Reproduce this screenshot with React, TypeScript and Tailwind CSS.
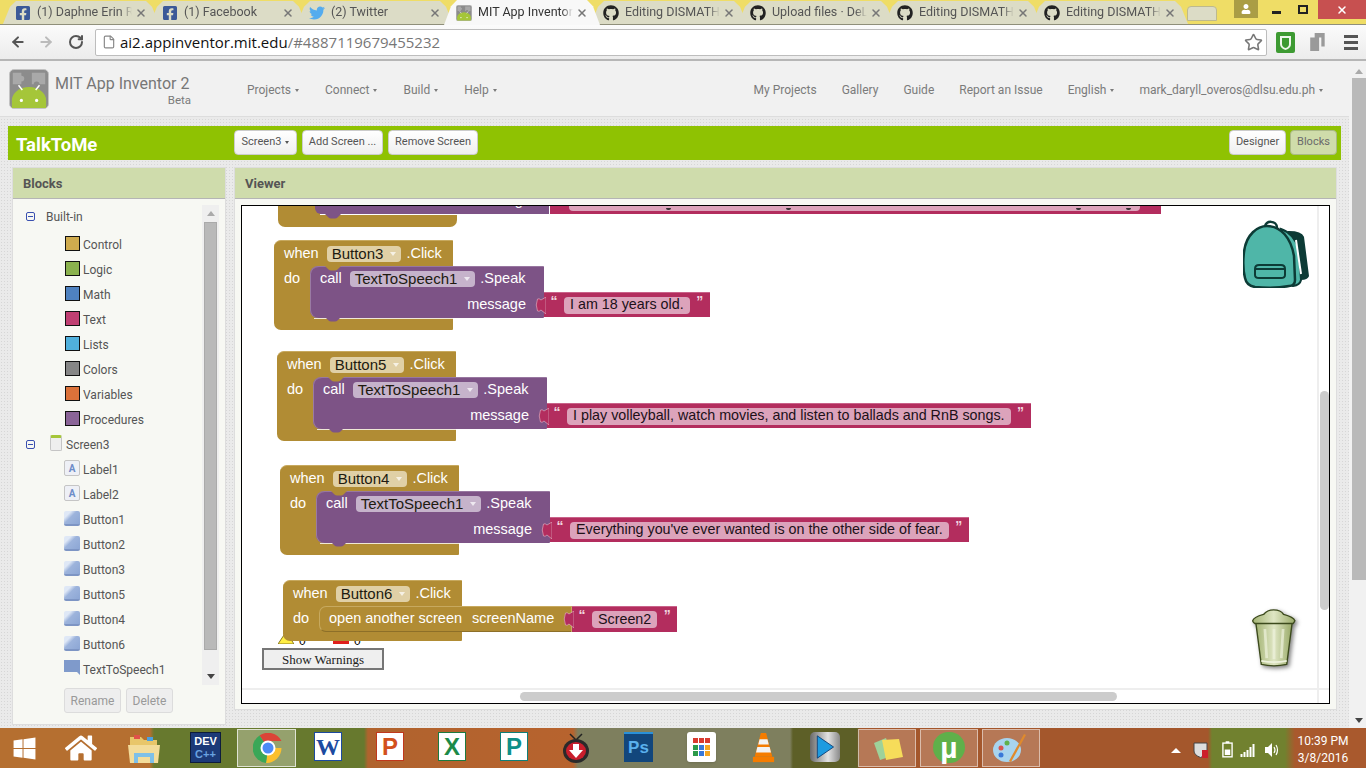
import React from 'react';
import { ArrowLeft, ArrowRight, RotateCw, Star, File, X } from 'lucide-react';
import { FaFacebookSquare, FaTwitter, FaGithub, FaWindows, FaHome, FaUser } from 'react-icons/fa';

const tabs = [
  { label: '(1) Daphne Erin R', icon: 'fb' },
  { label: '(1) Facebook', icon: 'fb' },
  { label: '(2) Twitter', icon: 'tw' },
  { label: 'MIT App Inventor', icon: 'ai', active: true },
  { label: 'Editing DISMATH', icon: 'gh' },
  { label: 'Upload files · DeL', icon: 'gh' },
  { label: 'Editing DISMATH', icon: 'gh' },
  { label: 'Editing DISMATH', icon: 'gh' },
];

const palette = [
  { label: 'Control', color: 'bg-[#cfab4e]' },
  { label: 'Logic', color: 'bg-[#8bb24e]' },
  { label: 'Math', color: 'bg-[#4f82c0]' },
  { label: 'Text', color: 'bg-[#c03f72]' },
  { label: 'Lists', color: 'bg-[#50b0dc]' },
  { label: 'Colors', color: 'bg-[#868686]' },
  { label: 'Variables', color: 'bg-[#dc723a]' },
  { label: 'Procedures', color: 'bg-[#8a6497]' },
];

const components = ['Label1', 'Label2', 'Button1', 'Button2', 'Button3', 'Button5', 'Button4', 'Button6', 'TextToSpeech1'];

const AndroidLogo = ({ size = 42 }: { size?: number }) => (
  <svg width={size} height={size} viewBox="0 0 42 42" className="shrink-0">
    <rect x="0.5" y="0.5" width="41" height="41" rx="5" fill="#8c8c8c" stroke="#c4c4c4" />
    <path d="M4 4h9v3a3 3 0 0 1 0 6v3H4zM24 4h14v12h-6a3 3 0 0 0-6 0h-2z" fill="#a9a9a9" />
    <path d="M3 41v-8a18 14 0 0 1 36 0v8z" fill="#a5c639" />
    <path d="M10 17l4 5M32 17l-4 5" stroke="#fff" strokeWidth="1.500" />
    <circle cx="13" cy="33" r="1.700" fill="#fff" />
    <circle cx="29" cy="33" r="1.700" fill="#fff" />
  </svg>
);

const TabIcon = ({ kind }: { kind: string }) => {
  if (kind === 'fb') return <FaFacebookSquare size={16} className="text-[#3b5998] shrink-0" />;
  if (kind === 'tw') return <FaTwitter size={16} className="text-[#55acee] shrink-0" />;
  if (kind === 'ai') return <AndroidLogo size={16} />;
  return <FaGithub size={16} className="text-[#222] shrink-0" />;
};

const Arrow = () => (
  <span className="inline-block ml-[4px] align-middle border-x-[2px] border-t-[3px] border-x-transparent border-t-current" />
);

const Dropdown = ({ label, light }: { label: string; light: string }) => (
  <span className={`ml-[8px] mr-[5px] inline-flex items-center h-[16px] pl-[5px] pr-[5px] rounded-[4px] text-[15px] text-[#201a10] ${light}`}>
    {label}
    <span className="ml-[7px] border-x-[3px] border-t-[4px] border-x-transparent border-t-white/70" />
  </span>
);

const Socket = () => (
  <svg width="11" height="17" viewBox="0 0 11 17" className="absolute left-[-9px] top-[4px]">
    <path d="M11 0L6 3Q4 1 2.500 2Q0 8 2.500 14Q4 15 6 13L11 17z" fill="#b32d5e" stroke="#e4bccb" strokeWidth="0.600" />
  </svg>
);

// pink string block on the end of a value socket
const TextBlock = ({ text, className }: { text: string; className: string }) => (
  <div className={`absolute flex items-center h-[25px] bg-[#b32d5e] border-t border-t-[#c9638a] text-white ${className}`}>
    <Socket />
    <span className="w-[20px] h-full text-center text-[#f0d4de] text-[14px] font-bold leading-[16px]">“</span>
    <span className="h-[17px] px-[6px] rounded-[4px] bg-[#dca3bb] text-[14.300px] text-[#201018] flex items-center whitespace-nowrap">{text}</span>
    <span className="w-[20px] h-full text-center text-[#f0d4de] text-[14px] font-bold leading-[16px]">”</span>
  </div>
);

const Notch = ({ fill, className }: { fill: string; className: string }) => (
  <svg width="16" height="5" viewBox="0 0 16 5" className={`absolute ${className}`}>
    <path d="M0 0h16l-3.500 3.500q-1 1-2.500 1H6q-1.500 0-2.500-1z" fill={fill} />
  </svg>
);

const SpeakBlock = ({ left, top, button, text }: { left: number; top: number; button: string; text: string }) => (
  <div className="absolute w-[440px] h-[91px]" style={{ left, top }}>
    <div className="absolute left-0 top-0 w-[179px] h-[90px] bg-[#b18c34] rounded-l-[7px] rounded-r-[1px] border-t border-t-[#c7a95f]" />
    <div className="absolute left-[10px] top-[5px] h-[18px] flex items-center text-white whitespace-nowrap">
      when<Dropdown label={button} light="bg-[#e0d0a6]" />.Click
    </div>
    <div className="absolute left-[10px] top-[31px] leading-[15px] text-white">do</div>
    <div className="absolute left-[36px] top-[26px] w-[234px] h-[52px] bg-[#7d5386] rounded-l-[8px] rounded-r-[1px] border-t border-t-[#9877a0] shadow-[inset_1px_0_0_#9a7aa3]">
      <div className="absolute left-[10px] top-[3px] h-[18px] flex items-center text-white whitespace-nowrap">
        call<Dropdown label="TextToSpeech1" light="bg-[#c6b3cb]" />.Speak
      </div>
      <div className="absolute right-[18px] top-[30px] leading-[15px] text-white">message</div>
    </div>
    <div className="absolute left-[40px] top-[78px] w-[139px] h-px bg-white/80" />
    <Notch fill="#7d5386" className="left-[51px] top-[77px]" />
    <Notch fill="#b18c34" className="left-[51px] top-[26px]" />
    <TextBlock text={text} className="left-[270px] top-[52px]" />
  </div>
);

const Backpack = () => (
  <svg width="66" height="68" viewBox="0 0 66 68" className="absolute left-[1001px] top-[14px]" fill="none" stroke="#0d3b36" strokeWidth="2">
    <path d="M46 12Q58 12 60 17L65 56Q64 59 58 59Z" fill="#0d3b36" />
    <path d="M38 9Q52 14 56 30L58 60Q57 65 50 66Z" fill="#4fb6a8" />
    <path d="M53 20L58 54" stroke="#fff" strokeWidth="2" />
    <path d="M22 7c0-7 12-7 12 1" strokeWidth="2.500" />
    <path d="M2 58C0 50 0 40 1 32C3 14 15 6 24 6C38 6 48 18 51 36L52 60Q52 66 46 66C35 68 22 68 12 67C6 66 3 63 2 58Z" fill="#4fb6a8" strokeWidth="2.500" />
    <path d="M12 49c0-3 1-4 4-4h22c3 0 4 1 4 4v6c0 2-1 3-4 3H16c-3 0-4-1-4-3z" />
    <path d="M12 49h30" />
  </svg>
);

const Trash = () => (
  <svg width="46" height="60" viewBox="0 0 50 66" className="absolute left-[1009px] top-[403px] drop-shadow-[2px_2px_2px_rgba(0,0,0,0.5)]">
    <defs>
      <linearGradient id="can" x1="0" x2="1" y1="0" y2="0">
        <stop offset="0" stopColor="#a3b373" />
        <stop offset="0.5" stopColor="#dfe6c4" />
        <stop offset="1" stopColor="#98a967" />
      </linearGradient>
    </defs>
    <path d="M5 15h40l-6 46q-14 3-28 0z" fill="url(#can)" stroke="#3c4a1c" strokeWidth="1.500" />
    <path d="M1.500 13q1-4 12-7 4-5 11-5 8 0 11 5 11 3 12.500 7-1 2-2 3H4q-2-1-2.500-3z" fill="url(#can)" stroke="#3c4a1c" strokeWidth="1.500" />
    <path d="M15 22l2 32M25 22v33M35 22l-2 32" stroke="#eef2dc" strokeWidth="3" opacity="0.7" />
    <path d="M11 57q14 3 28 0" stroke="#eef2dc" strokeWidth="2" fill="none" />
  </svg>
);

const Workspace = () => (
  <div className="relative flex-1 mx-[6px] mb-[5px] mt-[6px] border border-black bg-white overflow-hidden font-['Liberation_Sans',Arial,sans-serif] text-[14.500px]">
    {/* partly scrolled off block */}
    <div className="absolute left-[36px] top-[-110px]">
      <div className="absolute left-0 top-0 w-[179px] h-[131px] bg-[#b18c34] rounded-b-[7px] rounded-tr-none" />
      <div className="absolute left-[37px] top-0 w-[234px] h-[118px] bg-[#7d5386] rounded-bl-[6px]" />
      <div className="absolute left-[42px] top-[118px] w-[137px] h-px bg-white" />
      <Notch fill="#7d5386" className="left-[47px] top-[118px]" />
      <div className="absolute left-[194px] top-[97px] leading-[15px] text-white">message</div>
      <div className="absolute left-[272px] top-[92px] w-[611px] h-[26px] bg-[#b32d5e]">
        <div className="mt-[5px] ml-[19px] h-[18px] rounded-[4px] bg-[#dca3bb] w-[571px]" />
        <span className="absolute left-[116px] top-[20px] w-[5px] h-[2px] rounded-b-full bg-[#333]" />
        <span className="absolute left-[236px] top-[20px] w-[5px] h-[2px] rounded-b-full bg-[#333]" />
        <span className="absolute left-[526px] top-[20px] w-[5px] h-[2px] rounded-b-full bg-[#333]" />
        <span className="absolute left-[576px] top-[20px] w-[5px] h-[2px] rounded-b-full bg-[#333]" />
      </div>
    </div>

    <SpeakBlock left={32} top={34} button="Button3" text="I am 18 years old." />
    <SpeakBlock left={35} top={145} button="Button5" text="I play volleyball, watch movies, and listen to ballads and RnB songs." />
    <SpeakBlock left={38} top={259} button="Button4" text="Everything you've ever wanted is on the other side of fear." />

    {/* warning counters, partly behind the last block */}
    <svg width="16" height="12" viewBox="0 0 16 12" className="absolute left-[36px] top-[426px]">
      <path d="M8 0l8 12H0z" fill="#ffee44" stroke="#8a7a20" />
    </svg>
    <span className="absolute left-[57px] top-[428px] text-[12px] leading-[14px] text-black">0</span>
    <div className="absolute left-[91px] top-[431px] w-[16px] h-[7px] bg-[#e0201c]" />
    <span className="absolute left-[112px] top-[428px] text-[12px] leading-[14px] text-black">0</span>
    <button className="absolute left-[20px] top-[442px] w-[122px] h-[22px] bg-[#efefef] border-2 border-[#767676] font-['Liberation_Serif',serif] text-[13px] text-[#222]">Show Warnings</button>

    <div className="absolute left-[41px] top-[374px] w-[179px] h-[61px] bg-[#b18c34] rounded-l-[7px] rounded-r-[1px] border-t border-t-[#c7a95f]" />
    <div className="absolute left-[51px] top-[379px] h-[18px] flex items-center text-white whitespace-nowrap">
      when<Dropdown label="Button6" light="bg-[#e0d0a6]" />.Click
    </div>
    <div className="absolute left-[51px] top-[405px] leading-[15px] text-white">do</div>
    <div className="absolute left-[77px] top-[400px] w-[253px] h-[26px] bg-[#b18c34] rounded-l-[7px] border border-[#c7a95f] border-b-[#8d6f28] flex items-center pl-[9px] text-white whitespace-nowrap">
      open another screen<span className="ml-[10px]">screenName</span>
    </div>
    <TextBlock text="Screen2" className="left-[330px] top-[400px] h-[26px]" />

    <Backpack />
    <Trash />

    {/* svg canvas scrollbars */}
    <div className="absolute left-[1075px] top-0 bottom-0 w-[15px] bg-transparent border-l-2 border-l-[#eeeeee]">
      <div className="absolute left-[1px] top-[185px] w-[9px] h-[219px] rounded-full bg-[#cccccc]" />
    </div>
    <div className="absolute left-0 right-0 bottom-0 h-[15px] border-t-2 border-t-[#eeeeee]">
      <div className="absolute left-[278px] top-[2px] w-[597px] h-[9px] rounded-full bg-[#cccccc]" />
    </div>
  </div>
);

const IconTile = ({ className, children }: { className: string; children: React.ReactNode }) => (
  <span className={`absolute flex items-center justify-center ${className}`}>{children}</span>
);

const Taskbar = () => (
  <div className="h-[40px] shrink-0 relative bg-[linear-gradient(90deg,#b56f30_0,#b56f30_150px,#67792e_154px,#67792e_364px,#b0632e_368px,#b7632e_573px,#7e7f5e_578px,#7e7f5e_790px,#5d5f27_793px,#5d5f27_857px,#a4572c_860px,#a4572c_1208px,#71812f_1212px,#71812f_1285px,#a9592d_1295px,#a9592d_1366px)]">
    <FaWindows size={25} className="absolute left-[12px] top-[8px] text-white" />
    <FaHome size={32} className="absolute left-[65px] top-[4px] text-white" />
    <svg width="32" height="32" viewBox="0 0 32 32" className="absolute left-[128px] top-[5px]">
      <path d="M2 4h11l3 3h13v6H2z" fill="#e8c66a" />
      <rect x="6" y="2" width="6" height="4" fill="#e0524a" />
      <rect x="19" y="4" width="6" height="4" fill="#4aa0e0" />
      <path d="M0 12h32l-2 18H2z" fill="#f3dc9a" />
      <path d="M6 20h20v10h-4v-6H10v6H6z" fill="#7ec0e8" />
    </svg>
    <IconTile className="left-[190px] top-[4px] w-[31px] h-[31px] bg-[#1c3a78] border border-[#0d1c3c] flex-col font-['Liberation_Sans',sans-serif] font-bold text-[11px] leading-[13px] text-white">
      <span>DEV</span><span className="text-[#6aa2e0]">C++</span>
    </IconTile>
    <div className="absolute left-[237px] top-[1px] w-[59px] h-[38px] bg-white/30 border border-white/70" />
    <svg width="30" height="30" viewBox="0 0 30 30" className="absolute left-[253px] top-[5px]">
      <path d="M15 15L6.500 2.500A15 15 0 0 1 28.500 8H15z" fill="#db4437" />
      <path d="M15 15H28.500A15 15 0 0 1 13 30z" fill="#fbc02d" />
      <path d="M15 15L13 30A15 15 0 0 1 6.500 2.500z" fill="#3aa757" />
      <circle cx="15" cy="15" r="7.500" fill="#fff" />
      <circle cx="15" cy="15" r="5.500" fill="#4c8bf5" />
    </svg>
    <IconTile className="left-[314px] top-[4px] w-[28px] h-[29px] bg-white border border-[#1c4aa0] font-['Liberation_Serif',serif] font-bold text-[24px] text-[#1c4aa0]">W</IconTile>
    <IconTile className="left-[376px] top-[4px] w-[28px] h-[29px] bg-white border border-[#c0381c] font-['Liberation_Sans',sans-serif] font-bold text-[24px] text-[#d2501c]">P</IconTile>
    <IconTile className="left-[438px] top-[4px] w-[28px] h-[29px] bg-white border border-[#1c7a40] font-['Liberation_Sans',sans-serif] font-bold text-[24px] text-[#1c8a48]">X</IconTile>
    <IconTile className="left-[500px] top-[4px] w-[28px] h-[29px] bg-white border border-[#0f7f78] font-['Liberation_Sans',sans-serif] font-bold text-[24px] text-[#0f8f88]">P</IconTile>
    <svg width="28" height="32" viewBox="0 0 26 32" className="absolute left-[562px] top-[4px]">
      <path d="M7 2l6 6 6-6" stroke="#222" strokeWidth="1.500" fill="none" />
      <ellipse cx="13" cy="19" rx="13" ry="12" fill="#2a2a2a" />
      <ellipse cx="13" cy="19" rx="10" ry="9" fill="#c81e2c" />
      <path d="M10 12h6v6h4l-7 8-7-8h4z" fill="#fff" />
    </svg>
    <IconTile className="left-[624px] top-[4px] w-[29px] h-[30px] bg-[#12467c] border-t-2 border-t-[#2a90d8] font-['Liberation_Sans',sans-serif] font-bold text-[17px] text-[#5ab0ee]">Ps</IconTile>
    <div className="absolute left-[687px] top-[4px] w-[29px] h-[30px] rounded-[3px] bg-white shadow-sm grid grid-cols-3 gap-[1.500px] p-[6px]">
      {['bg-[#d93a2f]', 'bg-[#d93a2f]', 'bg-[#d93a2f]', 'bg-[#2c9a4a]', 'bg-[#3a78d8]', 'bg-[#f5a623]', 'bg-[#2c9a4a]', 'bg-[#3a78d8]', 'bg-[#f5a623]'].map((c, i) => (
        <span key={i} className={c} />
      ))}
    </div>
    <svg width="27" height="30" viewBox="0 0 24 34" className="absolute left-[750px] top-[5px]">
      <path d="M9 0h6l7 27H2z" fill="#f57c00" />
      <path d="M7.500 7h9l1.500 6H6zM5 16h14l1.500 6H3.500z" fill="#f2f2f2" />
      <path d="M0 27h24v6H0z" fill="#f57c00" />
    </svg>
    <div className="absolute left-[810px] top-[4px] w-[30px] h-[30px] rounded-[5px] bg-[linear-gradient(90deg,#6a6a6a,#e2e2e2_60%,#8a8a8a)] flex items-center justify-center">
      <svg width="22" height="24" viewBox="0 0 24 28"><path d="M3 1l19 13L3 27z" fill="#1e9be0" stroke="#0a3a70" /></svg>
    </div>
    <div className="absolute left-[858px] top-[1px] w-[58px] h-[38px] bg-white/20 border border-white/50" />
    <div className="absolute left-[920px] top-[1px] w-[58px] h-[38px] bg-white/20 border border-white/50" />
    <div className="absolute left-[982px] top-[1px] w-[58px] h-[38px] bg-white/20 border border-white/50" />
    <svg width="32" height="24" viewBox="0 0 32 24" className="absolute left-[872px] top-[9px]">
      <path d="M2 6l12-5 6 18-12 4z" fill="#9ed29a" />
      <path d="M10 3l17-1 4 18-17 3z" fill="#f6dc5a" />
    </svg>
    <div className="absolute left-[933px] top-[4px] w-[32px] h-[31px] rounded-full bg-[#5fb04a] flex items-center justify-center font-['Liberation_Sans',sans-serif] font-bold text-[30px] text-white leading-none">µ</div>
    <svg width="34" height="30" viewBox="0 0 34 30" className="absolute left-[993px] top-[5px]">
      <ellipse cx="14" cy="17" rx="14" ry="12" fill="#a8d4ee" />
      <circle cx="8" cy="15" r="2.500" fill="#d9534f" />
      <circle cx="14" cy="10" r="2.500" fill="#5fb04a" />
      <circle cx="8" cy="22" r="2.500" fill="#3a78d8" />
      <path d="M31 1l2 1-15 27-2-1z" fill="#e08a2c" />
    </svg>
    <span className="absolute left-[1171px] top-[20px] border-x-[5px] border-b-[5px] border-x-transparent border-b-white" />
    <svg width="15" height="16" viewBox="0 0 15 16" className="absolute left-[1193px] top-[14px]">
      <path d="M1 1h13v8q0 4-6.500 6.500Q1 13 1 9z" fill="#ddd" stroke="#444" />
      <rect x="9" y="8" width="6" height="8" fill="#cc1f2a" />
    </svg>
    <svg width="11" height="17" viewBox="0 0 12 18" className="absolute left-[1222px] top-[13px]">
      <rect x="1" y="2" width="10" height="15" fill="none" stroke="#fff" strokeWidth="1.500" />
      <rect x="4" y="0" width="4" height="2" fill="#fff" />
      <rect x="3" y="9" width="6" height="6" fill="#fff" />
    </svg>
    <svg width="16" height="14" viewBox="0 0 15 14" className="absolute left-[1240px] top-[15px]">
      <path d="M0 11h2v3H0zM3 9h2v5H3zM6 7h2v7H6zM9 4h2v10H9zM12 1h2v13h-2z" fill="#fff" />
    </svg>
    <svg width="16" height="16" viewBox="0 0 14 16" className="absolute left-[1264px] top-[14px]" fill="none" stroke="#fff">
      <path d="M0 5h3l4-4v14l-4-4H0z" fill="#fff" stroke="none" />
      <path d="M9 5q2 3 0 6M11 3q3 5 0 10" strokeWidth="1.200" />
    </svg>
    <div className="absolute left-[1293px] top-[5px] w-[60px] text-center font-['Roboto',sans-serif] text-[12px] leading-[17px] text-white whitespace-nowrap">10:39 PM<br />3/8/2016</div>
  </div>
);

const App: React.FC = () => (
  <div className="w-[1366px] h-[768px] overflow-hidden flex flex-col bg-[#f1f1f1] font-['Roboto',sans-serif]">
    {/* window chrome */}
    <div className="h-[25px] shrink-0 bg-[#efdd66] flex items-end pl-[3px] relative text-[12.500px] text-[#555]">
      <div className="absolute left-0 right-0 bottom-0 h-px bg-[#8f8f7a]" />
      {tabs.map((t, i) => (
        <div
          key={i}
          className={`relative w-[156px] shrink-0 flex items-center pl-[12px] [clip-path:polygon(0_100%,7px_25%,13px_0,calc(100%-13px)_0,calc(100%-7px)_25%,100%_100%)] ${i > 0 ? '-ml-[9px]' : ''} ${t.active ? 'h-[25px] z-10 bg-[#f8f8f8] text-[#333]' : 'h-[23px] mb-px bg-[#dcdcc6]'}`}
        >
          <TabIcon kind={t.icon} />
          <span className="ml-[6px] w-[95px] overflow-hidden whitespace-nowrap [mask-image:linear-gradient(90deg,#000_88%,transparent)]">{t.label}</span>
          <X size={12} strokeWidth={3} className="ml-[3px] text-[#777] shrink-0" />
        </div>
      ))}
      <div className="w-[30px] h-[15px] mb-[4px] -ml-[1px] rounded-t-[4px] bg-[#dcdcc6] border border-[#bdb98e]" />
      <div className="absolute right-0 top-0 flex items-start">
        <div className="w-[24px] h-[18px] bg-[#aa9d45] flex items-center justify-center"><FaUser size={10} className="text-white" /></div>
        <div className="w-[30px] h-[19px] pl-[14px] pt-[11px]"><span className="block w-[9px] h-[3px] bg-[#222]" /></div>
        <div className="w-[30px] h-[19px] flex items-center justify-center"><span className="w-[10px] h-[9px] border-2 border-[#222]" /></div>
        <div className="w-[48px] h-[19px] bg-[#c75050] flex items-center justify-center"><X size={12} strokeWidth={3} className="text-white" /></div>
      </div>
    </div>

    <div className="h-[36px] shrink-0 flex items-center bg-[linear-gradient(#fbfbfb,#ececec)] border-b-2 border-b-[#b6b6b6] pl-[10px] pr-[8px]">
      <ArrowLeft size={16} strokeWidth={3} className="text-[#555]" />
      <ArrowRight size={16} strokeWidth={3} className="text-[#bbb] ml-[12px]" />
      <RotateCw size={16} strokeWidth={3} className="text-[#555] ml-[14px]" />
      <div className="ml-[11px] flex-1 h-[27px] bg-white border border-[#bdbdbd] rounded-[2px] flex items-center pl-[6px] pr-[3px] font-['Open_Sans',sans-serif] text-[15px]">
        <File size={14} className="text-[#888]" />
        <span className="ml-[4px] text-[#111]">ai2.appinventor.mit.edu</span>
        <span className="text-[#777]">/#4887119679455232</span>
        <Star size={19} className="ml-auto text-[#777]" />
      </div>
      <svg width="19" height="21" viewBox="0 0 19 21" className="ml-[9px]">
        <rect width="19" height="21" rx="2" fill="#3d9a32" />
        <path d="M4 4h11v8q0 4-5.500 6Q4 16 4 12z" fill="#eef6ec" />
        <path d="M6 6h7v6q0 3-3.500 4Q6 15 6 12z" fill="#3d9a32" />
      </svg>
      <svg width="18" height="20" viewBox="0 0 16 18" className="ml-[14px]"><path d="M5 1h9v12h-3V5H5zM1 5h8v12H1z" fill="#9a9a9a" /></svg>
      <div className="ml-[17px] w-[14px] flex flex-col gap-[3px]">
        <span className="h-[3px] bg-[#555]" /><span className="h-[3px] bg-[#555]" /><span className="h-[3px] bg-[#555]" />
      </div>
    </div>

    {/* page + browser scrollbar */}
    <div className="flex-1 flex min-h-0">
      <div className="flex-1 flex flex-col min-w-0 bg-[#eaeaea] bg-[radial-gradient(#d6d6d6_0.5px,transparent_0.6px)] bg-[length:3px_3px]">
        <header className="h-[56px] shrink-0 bg-[#f1f1f1] border-b border-b-[#dddddd] flex items-center pl-[9px] pr-[26px] text-[12px] text-[#7b7b7b]">
          <AndroidLogo size={40} />
          <div className="ml-[6px] w-[136px] mt-[5px]">
            <div className="text-[16px] leading-[18px] text-[#777]">MIT App Inventor 2</div>
            <div className="text-right text-[11.500px] leading-[14px]">Beta</div>
          </div>
          <nav className="ml-[56px] mt-[3px] flex gap-[26px]">
            <span>Projects<Arrow /></span>
            <span>Connect<Arrow /></span>
            <span>Build<Arrow /></span>
            <span>Help<Arrow /></span>
          </nav>
          <nav className="ml-auto mt-[3px] flex gap-[25px] items-center">
            <span>My Projects</span>
            <span>Gallery</span>
            <span>Guide</span>
            <span>Report an Issue</span>
            <span>English<Arrow /></span>
            <span>mark_daryll_overos@dlsu.edu.ph<Arrow /></span>
          </nav>
        </header>

        <div className="mt-[9px] mx-[8px] h-[34px] shrink-0 bg-[#8fc202] flex items-start pt-[4px] pl-[8px] pr-[4px] text-[11px] text-[#555]">
          <div className="w-[218px] mt-[3px] text-white font-bold text-[18.500px] leading-[24px]">TalkToMe</div>
          <div className="h-[25px] w-[63px] flex items-center justify-center bg-[linear-gradient(#fff,#efefef)] rounded-[4px] border border-[#ccc]">Screen3<Arrow /></div>
          <div className="ml-[5px] h-[25px] w-[81px] flex items-center justify-center bg-[linear-gradient(#fff,#efefef)] rounded-[4px] border border-[#ccc]">Add Screen ...</div>
          <div className="ml-[5px] h-[25px] w-[90px] flex items-center justify-center bg-[linear-gradient(#fff,#efefef)] rounded-[4px] border border-[#ccc]">Remove Screen</div>
          <div className="ml-auto h-[25px] w-[57px] flex items-center justify-center bg-[linear-gradient(#fff,#efefef)] rounded-[4px] border border-[#ccc]">Designer</div>
          <div className="ml-[4px] h-[25px] w-[47px] flex items-center justify-center bg-[#cfdcaa] text-[#6a6a6a] rounded-[4px] border border-[#aab985]">Blocks</div>
        </div>

        <div className="flex-1 min-h-0 flex items-start mt-[7px] mb-[3px] ml-[12px] mr-[12px] gap-[8px]">
          <aside className="w-[214px] h-full shrink-0 flex flex-col bg-[#f7f8f3] border border-[#dddddd]">
            <div className="h-[31px] pt-[1px] shrink-0 bg-[#cfdcac] border-b border-b-[#b5b5b5] flex items-center pl-[10px] text-[13px] font-bold text-[#555]">Blocks</div>
            <div className="relative flex-1 pl-[13px] text-[12px] text-[#555]">
              <div className="absolute left-[189px] top-[6px] w-[17px] h-[480px] bg-[#efefef] flex flex-col items-center">
                <span className="mt-[6px] border-x-[4px] border-b-[5px] border-x-transparent border-b-[#aaa]" />
                <span className="mt-[6px] w-[13px] h-[428px] bg-[#b9b9b9] border border-[#aaa]" />
                <span className="mt-[24px] border-x-[4px] border-t-[5px] border-x-transparent border-t-[#444]" />
              </div>
              <div className="h-[25px] mt-[5px] flex items-center">
                <span className="w-[9px] h-[9px] rounded-[2px] border border-[#3a50b0] flex items-center justify-center"><span className="w-[5px] h-px bg-[#3a50b0]" /></span>
                <span className="ml-[11px]">Built-in</span>
              </div>
              <div className="pl-[39px] pt-[3px]">
                {palette.map((p) => (
                  <div key={p.label} className="h-[25px] flex items-center">
                    <span className={`w-[15px] h-[15px] mb-[3px] border border-[#111] ${p.color}`} />
                    <span className="ml-[3px]">{p.label}</span>
                  </div>
                ))}
              </div>
              <div className="h-[25px] flex items-center">
                <span className="w-[9px] h-[9px] rounded-[2px] border border-[#3a50b0] flex items-center justify-center"><span className="w-[5px] h-px bg-[#3a50b0]" /></span>
                <span className="ml-[15px] w-[12px] h-[16px] mb-[3px] rounded-[2px] border border-[#c5c5c5] border-t-[3px] border-t-[#a5c639] bg-[#eeeeee]" />
                <span className="ml-[4px]">Screen3</span>
              </div>
              <div className="pl-[38px]">
                {components.map((c) => (
                  <div key={c} className="h-[25px] flex items-center">
                    {c.startsWith('Label') && (
                      <span className="w-[16px] h-[16px] mb-[3px] rounded-[2px] border border-[#c5c5c5] bg-[#eef0f6] flex items-center justify-center font-bold text-[10px] text-[#6d8cc8]">A</span>
                    )}
                    {c.startsWith('Button') && (
                      <span className="w-[16px] h-[15px] mb-[3px] rounded-[2px] bg-[linear-gradient(135deg,#dfe8f6_0,#dfe8f6_25%,#9db4dc_45%,#8ca6d4)] border-b-2 border-b-[#7d95c4]" />
                    )}
                    {c.startsWith('TextTo') && (
                      <svg width="16" height="16" viewBox="0 0 16 16" className="mb-[3px]"><path d="M0 0h16v15l-3-3H0z" fill="#7f9acb" /></svg>
                    )}
                    <span className="ml-[3px]">{c}</span>
                  </div>
                ))}
              </div>
              <div className="mt-[6px] ml-[38px] flex gap-[5px]">
                <div className="w-[57px] h-[25px] flex items-center justify-center rounded-[3px] bg-[#eeeeee] border border-[#dcdcdc] text-[#999]">Rename</div>
                <div className="w-[47px] h-[25px] flex items-center justify-center rounded-[3px] bg-[#eeeeee] border border-[#dcdcdc] text-[#999]">Delete</div>
              </div>
            </div>
          </aside>

          <main className="flex-1 h-[543px] min-w-0 flex flex-col bg-[#f7f8f3] border border-[#dddddd]">
            <div className="h-[31px] pt-[1px] shrink-0 bg-[#cfdcac] border-b border-b-[#b5b5b5] flex items-center pl-[10px] text-[13px] font-bold text-[#555]">Viewer</div>
            <Workspace />
          </main>
        </div>
      </div>
      <div className="w-[17px] shrink-0 bg-[#f1f1f1] flex flex-col items-center">
        <span className="mt-[8px] ml-[2px] border-x-[4px] border-b-[5px] border-x-transparent border-b-[#aaa]" />
        <span className="mt-[4px] ml-[3px] w-[14px] h-[502px] bg-[#b9b9b9]" />
        <span className="mt-auto mb-[5px] ml-[2px] border-x-[4px] border-t-[5px] border-x-transparent border-t-[#444]" />
      </div>
    </div>

    <Taskbar />
  </div>
);

export default App;
